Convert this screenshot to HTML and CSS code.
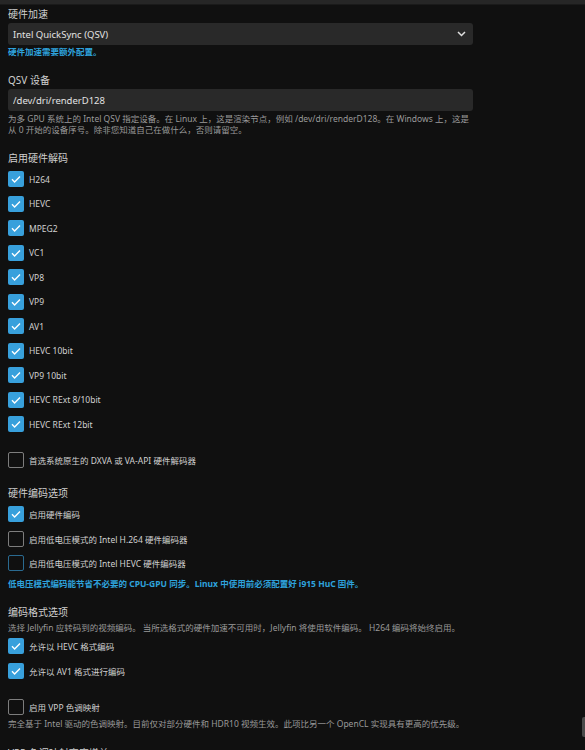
FILE: index.html
```html
<!DOCTYPE html>
<html lang="zh-CN">
<head>
  <meta charset="UTF-8" />
  <meta name="viewport" content="width=device-width, initial-scale=1.0" />
  <title>转码</title>
  <link rel="stylesheet" href="styles.css">
</head>
<body>
  <div class="topbar"></div>

  <div class="page">
    <div class="field first">
      <label class="label" for="hw_accel">硬件加速</label>
      <div class="select-wrap">
        <select id="hw_accel" class="input">
          <option value="qsv" selected>Intel QuickSync (QSV)</option>
          <option value="none">无</option>
          <option value="vaapi">Video Acceleration API (VAAPI)</option>
          <option value="nvenc">Nvidia NVENC</option>
        </select>
        <svg class="chevron" width="9" height="6" viewBox="0 0 9 6">
          <path d="M1 1l3.5 3.5L8 1" fill="none" stroke="#e0e0e0" stroke-width="1.5" />
        </svg>
      </div>
      <div class="note">硬件加速需要额外配置。</div>
    </div>

    <div class="field">
      <label class="label" for="qsv_device">QSV 设备</label>
      <input type="text" id="qsv_device" class="input" value="/dev/dri/renderD128" />
      <div class="desc">为多 GPU 系统上的 Intel QSV 指定设备。在 Linux 上，这是渲染节点，例如 /dev/dri/renderD128。在 Windows 上，这是从 0 开始的设备序号。除非您知道自己在做什么，否则请留空。</div>
    </div>

    <h3 class="heading">启用硬件解码</h3>
    <div class="checks">
      <label class="check"><span class="box on"><svg viewBox="0 0 16 16"><path d="M4 8.3l2.6 2.6L12 5.5" /></svg></span>H264</label>
      <label class="check"><span class="box on"><svg viewBox="0 0 16 16"><path d="M4 8.3l2.6 2.6L12 5.5" /></svg></span>HEVC</label>
      <label class="check"><span class="box on"><svg viewBox="0 0 16 16"><path d="M4 8.3l2.6 2.6L12 5.5" /></svg></span>MPEG2</label>
      <label class="check"><span class="box on"><svg viewBox="0 0 16 16"><path d="M4 8.3l2.6 2.6L12 5.5" /></svg></span>VC1</label>
      <label class="check"><span class="box on"><svg viewBox="0 0 16 16"><path d="M4 8.3l2.6 2.6L12 5.5" /></svg></span>VP8</label>
      <label class="check"><span class="box on"><svg viewBox="0 0 16 16"><path d="M4 8.3l2.6 2.6L12 5.5" /></svg></span>VP9</label>
      <label class="check"><span class="box on"><svg viewBox="0 0 16 16"><path d="M4 8.3l2.6 2.6L12 5.5" /></svg></span>AV1</label>
      <label class="check"><span class="box on"><svg viewBox="0 0 16 16"><path d="M4 8.3l2.6 2.6L12 5.5" /></svg></span>HEVC 10bit</label>
      <label class="check"><span class="box on"><svg viewBox="0 0 16 16"><path d="M4 8.3l2.6 2.6L12 5.5" /></svg></span>VP9 10bit</label>
      <label class="check"><span class="box on"><svg viewBox="0 0 16 16"><path d="M4 8.3l2.6 2.6L12 5.5" /></svg></span>HEVC RExt 8/10bit</label>
      <label class="check"><span class="box on"><svg viewBox="0 0 16 16"><path d="M4 8.3l2.6 2.6L12 5.5" /></svg></span>HEVC RExt 12bit</label>
    </div>

    <div class="checks spaced">
      <label class="check"><span class="box"></span>首选系统原生的 DXVA 或 VA-API 硬件解码器</label>
    </div>

    <h3 class="heading after-checks">硬件编码选项</h3>
    <div class="checks">
      <label class="check"><span class="box on"><svg viewBox="0 0 16 16"><path d="M4 8.3l2.6 2.6L12 5.5" /></svg></span>启用硬件编码</label>
      <label class="check"><span class="box"></span>启用低电压模式的 Intel H.264 硬件编码器</label>
      <label class="check"><span class="box focus"></span>启用低电压模式的 Intel HEVC 硬件编码器</label>
    </div>
    <div class="note loose">低电压模式编码能节省不必要的 CPU-GPU 同步。Linux 中使用前必须配置好 i915 HuC 固件。</div>

    <h3 class="heading after-note">编码格式选项</h3>
    <div class="desc top">选择 Jellyfin 应转码到的视频编码。 当所选格式的硬件加速不可用时，Jellyfin 将使用软件编码。 H264 编码将始终启用。</div>
    <div class="checks after-desc">
      <label class="check"><span class="box on"><svg viewBox="0 0 16 16"><path d="M4 8.3l2.6 2.6L12 5.5" /></svg></span>允许以 HEVC 格式编码</label>
      <label class="check"><span class="box on"><svg viewBox="0 0 16 16"><path d="M4 8.3l2.6 2.6L12 5.5" /></svg></span>允许以 AV1 格式进行编码</label>
    </div>

    <div class="checks spaced wide">
      <label class="check short"><span class="box"></span>启用 VPP 色调映射</label>
      <div class="desc tight">完全基于 Intel 驱动的色调映射。目前仅对部分硬件和 HDR10 视频生效。此项比另一个 OpenCL 实现具有更高的优先级。</div>
    </div>

    <div class="field last">
      <label class="label" for="vpp_brightness">VPP 色调映射亮度增益</label>
      <input type="text" id="vpp_brightness" class="input" value="16" />
    </div>
  </div>

  <div class="scroll-thumb"></div>
</body>
</html>
```

FILE: styles.css
```css
html,
body {
  height: 100%;
  overflow: hidden;
}

body {
  margin: 0;
  background-color: #101010;
  color: #d0d0d0;
  font-family: "Noto Sans", "Noto Sans CJK SC", sans-serif;
}

.topbar {
  height: 4px;
  background-color: #262626;
  border-bottom: 1px solid #1a1a1a;
}

.page {
  width: 465px;
  padding-left: 8px;
}

.field {
  margin-top: 15px;
}

.field.first {
  margin-top: 2px;
}

.field.last {
  margin-top: 17px;
}

.label {
  display: block;
  font-size: 10px;
  line-height: 14px;
  color: #cfcfcf;
}

.select-wrap {
  position: relative;
}

.input {
  display: block;
  box-sizing: border-box;
  width: 100%;
  height: 22px;
  margin-top: 2px;
  padding: 0 5px;
  background-color: #292929;
  color: #e2e2e2;
  border: none;
  border-radius: 3px;
  font-family: inherit;
  font-size: 9.5px;
  outline: none;
  -webkit-appearance: none;
  appearance: none;
}

.chevron {
  position: absolute;
  right: 7px;
  top: 8px;
}

.note {
  margin-top: 1px;
  font-size: 8.5px;
  line-height: 12px;
  font-weight: 700;
  color: #2ea2dc;
}

.note.loose {
  margin-top: 2px;
}

.desc {
  margin-top: 2px;
  font-size: 8.5px;
  line-height: 11px;
  color: #9a9a9a;
}

.desc.top {
  margin-top: 3px;
}

.desc.tight {
  margin-top: 0;
}

.heading {
  margin: 16px 0 2px;
  font-size: 10px;
  line-height: 14px;
  font-weight: 400;
  color: #cfcfcf;
}

.heading.after-checks {
  margin-top: 14px;
}

.heading.after-note {
  margin-top: 15px;
}

.checks.after-desc {
  margin-top: 1.5px;
}

.checks.spaced {
  margin-top: 11px;
}

.checks.wide {
  margin-top: 12.5px;
}

.check {
  display: flex;
  align-items: center;
  gap: 5px;
  height: 24.5px;
  font-size: 8.5px;
  color: #d0d0d0;
}

.check.short {
  height: 22px;
}

.box {
  box-sizing: border-box;
  width: 16px;
  height: 16px;
  flex: none;
  border: 1.5px solid #7d7d7d;
  border-radius: 2px;
}

.box.focus {
  border-color: #2a6a90;
}

.box.on {
  border: none;
  background-color: #38a0dc;
}

.box svg {
  display: block;
  width: 16px;
  height: 16px;
}

.box svg path {
  fill: none;
  stroke: #fff;
  stroke-width: 1.4;
}

.scroll-thumb {
  position: fixed;
  right: 0;
  top: 717px;
  width: 3px;
  height: 20px;
  border-radius: 2px 0 0 2px;
  background-color: #4a4a4a;
}
```
